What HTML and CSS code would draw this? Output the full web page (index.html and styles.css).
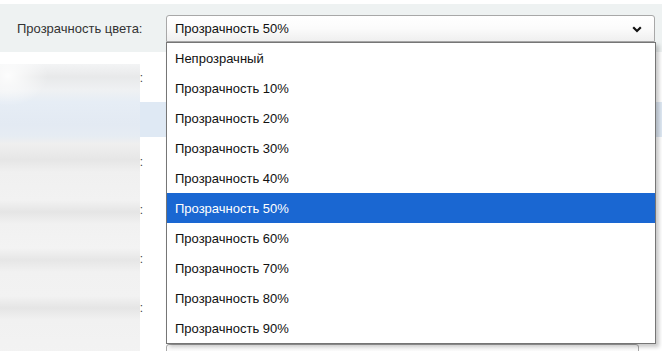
FILE: index.html
```html
<!DOCTYPE html>
<html lang="ru">
<head>
<meta charset="utf-8">
<title>Прозрачность цвета</title>
<link rel="stylesheet" href="styles.css">
</head>
<body>
<div class="page">
  <div class="topband">
    <label class="toplabel">Прозрачность цвета:</label>
    <div class="selectwrap">
      <div class="select">
        <span class="select-value">Прозрачность 50%</span>
        <svg class="chev" width="10" height="7" viewBox="0 0 10 7"><path d="M1.2 1.3 L5 5 L8.8 1.3" fill="none" stroke="#111" stroke-width="2.2"/></svg>
      </div>
      <ul class="dropdown">
        <li class="opt">Непрозрачный</li>
        <li class="opt">Прозрачность 10%</li>
        <li class="opt">Прозрачность 20%</li>
        <li class="opt">Прозрачность 30%</li>
        <li class="opt">Прозрачность 40%</li>
        <li class="opt opt-selected">Прозрачность 50%</li>
        <li class="opt">Прозрачность 60%</li>
        <li class="opt">Прозрачность 70%</li>
        <li class="opt">Прозрачность 80%</li>
        <li class="opt">Прозрачность 90%</li>
      </ul>
    </div>
  </div>
  <div class="rows">
    <div class="row row-h50"><span class="rlabel">:</span><div class="field"></div></div>
    <div class="row row-h35 row-hl"><span class="rlabel"></span><div class="field"></div></div>
    <div class="row row-h48"><span class="rlabel">:</span><div class="field"></div></div>
    <div class="row row-h49"><span class="rlabel">:</span><div class="field"></div></div>
    <div class="row row-h49"><span class="rlabel">:</span><div class="field"></div></div>
    <div class="row row-h49"><span class="rlabel">:</span><div class="field"></div></div>
    <div class="row row-h49"><span class="rlabel"></span><div class="field field-last"></div></div>
    <div class="blurpanel"></div>
  </div>
</div>
</body>
</html>
```
FILE: styles.css
```css
html, body {
  margin: 0;
  padding: 0;
  background: #ffffff;
  overflow: hidden;
}
body {
  font-family: "Liberation Sans", Arial, sans-serif;
  font-size: 13px;
  color: #111;
}
.page {
  width: 662px;
  height: 351px;
  overflow: hidden;
  padding-top: 4px;
  box-sizing: border-box;
}
.topband {
  height: 48px;
  background: #eef2f2;
  display: grid;
  grid-template-columns: 166px 489px;
  align-items: start;
  padding-top: 11px;
  box-sizing: border-box;
  position: relative;
  z-index: 5;
}
.toplabel {
  padding-left: 17px;
  line-height: 27px;
  font-size: 13px;
  color: #333;
}
.selectwrap {
  position: relative;
}
.select {
  height: 27px;
  box-sizing: border-box;
  border: 1px solid #a8a8a8;
  border-radius: 3px 3px 0 0;
  background: linear-gradient(#ffffff 0%, #fbfbfb 50%, #efefef 100%);
  display: flex;
  align-items: center;
  justify-content: space-between;
  padding: 0 12px 0 8px;
}
.select-value {
  color: #111;
  line-height: 25px;
}
.chev {
  display: block;
  margin-top: 1px;
}
.dropdown {
  position: absolute;
  top: 27px;
  left: 0;
  width: 488px;
  margin: 0;
  padding: 0;
  list-style: none;
  background: #fff;
  border: 1px solid #767676;
  box-shadow: 3px 3px 4px rgba(0, 0, 0, 0.22);
}
.opt {
  height: 30px;
  line-height: 31px;
  padding-left: 8px;
  color: #111;
}
.opt-selected {
  background: #1a67d2;
  color: #fff;
}
.rows {
  position: relative;
  display: flex;
  flex-direction: column;
}
.row {
  display: grid;
  grid-template-columns: 143px 23px 473px;
  align-items: center;
}
.row-h50 { height: 50px; }
.row-h35 { height: 35px; }
.row-h48 { height: 48px; }
.row-h49 { height: 49px; }
.row-hl { background: #dfe9f4; }
.rlabel {
  text-align: right;
  font-size: 12px;
  color: #444;
  line-height: 12px;
  padding-top: 1px;
}
.field {
  grid-column: 3;
  height: 26px;
  box-sizing: border-box;
  border: 1px solid #a8a8a8;
  border-radius: 3px;
  background: linear-gradient(#ffffff, #f0f0f0);
}
.field-last {
  align-self: start;
  margin-top: 12px;
}
.blurpanel {
  position: absolute;
  left: 0;
  top: 12px;
  width: 140px;
  height: 300px;
  background:
    radial-gradient(ellipse 40px 30px at 8px 12px, rgba(255,255,255,0.9), rgba(255,255,255,0) 100%),
    linear-gradient(to bottom,
      #f3f4f5 0px, #e8e9ea 13px, #eff1f3 26px, #e6edf5 38px,
      #e3eaf3 60px, #e6ecf3 72px, #efefef 80px,
      #e6e6e6 96px, #f0f0f0 108px, #f2f2f2 136px,
      #e5e5e5 148px, #f1f1f1 160px, #f3f3f3 184px,
      #e6e6e6 196px, #f1f1f1 208px, #f2f2f2 232px,
      #e5e5e5 244px, #f1f1f1 256px, #f3f3f3 300px);
}
```
